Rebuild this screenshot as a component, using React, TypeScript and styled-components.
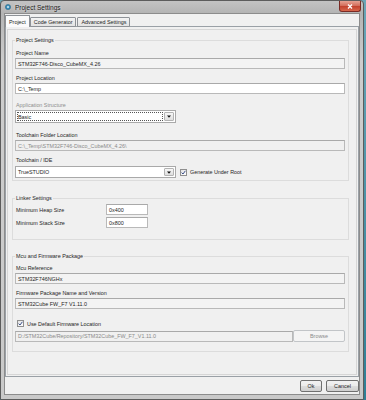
import React from 'react'
import styled, { createGlobalStyle } from 'styled-components'

const GlobalStyle = createGlobalStyle`
  html, body {
    margin: 0;
    padding: 0;
  }
  body {
    width: 366px;
    height: 400px;
    overflow: hidden;
    background: linear-gradient(180deg, #6aa6b8 0%, #2f7f95 100%);
    font-family: "Liberation Sans", Arial, sans-serif;
    color: #1e1e1e;
  }
`

const Window = styled.div`
  width: 364px;
  height: 400px;
  box-sizing: border-box;
  display: flex;
  flex-direction: column;
  background: linear-gradient(180deg, #c3c3c3 0%, #b4b4b4 12px, #cdcdcd 60px, #c9c9c9 100%);
  border: 1px solid #5c5c5c;
  border-radius: 4px 4px 0 0;
  padding: 0 3px 4px 3px;
`

const TitleBar = styled.div`
  height: 12px;
  display: flex;
  align-items: center;
  gap: 4px;
  padding-left: 1px;
  font-size: 6.5px;
  color: #1a1a1a;
`

const TitleText = styled.span`
  flex: 1;
  text-shadow: 0 0 3px rgba(255, 255, 255, 0.8);
`

const CloseButton = styled.div`
  width: 22px;
  height: 11px;
  margin-top: -1px;
  margin-right: -1px;
  box-sizing: border-box;
  display: flex;
  align-items: center;
  justify-content: center;
  border: 1px solid #7a2a24;
  border-top: none;
  border-radius: 0 0 3px 3px;
  background: linear-gradient(180deg, #e6a293 0%, #d3705e 45%, #c2432f 55%, #d7664c 100%);
`

const Client = styled.div`
  flex: 1;
  display: flex;
  flex-direction: column;
  background: #f0f0f0;
  border: 1px solid #8c8c8c;
`

const TabRow = styled.div`
  display: flex;
  align-items: flex-end;
  height: 13px;
  margin-bottom: -1px;
  position: relative;
  z-index: 1;
`

const Tab = styled.div<{ $active?: boolean }>`
  height: ${(p) => (p.$active ? 12 : 10)}px;
  box-sizing: border-box;
  display: flex;
  align-items: center;
  padding: 0 ${(p) => (p.$active ? 3 : 3)}px;
  margin-right: ${(p) => (p.$active ? 0 : 1)}px;
  font-size: 5.4px;
  border: 1px solid #8e9297;
  border-bottom: ${(p) => (p.$active ? 'none' : '1px solid #8e9297')};
  border-radius: 1px 1px 0 0;
  background: ${(p) => (p.$active ? '#fbfbfb' : 'linear-gradient(180deg, #f3f3f3, #e3e3e3)')};
`

const TabPanel = styled.div`
  flex: 1;
  display: flex;
  flex-direction: column;
  border: 1px solid #9aa0a6;
  background: #f0f0f0;
  padding: 2px 1px 1px 1px;
`

const ScrollArea = styled.div`
  flex: 1;
  border: 1px solid #d6d6d6;
  padding: 3px 7px 0 4px;
`

const Group = styled.fieldset<{ $gap: number; $bottom: number }>`
  margin: ${(p) => p.$gap}px 0 0 0;
  padding: 0 3px ${(p) => p.$bottom}px 2px;
  min-inline-size: 0;
  border: 1px solid #dcdcdc;
  border-radius: 0;
`

const Legend = styled.legend`
  padding: 0 1px;
  font-size: 5.4px;
  line-height: 8px;
`

const Label = styled.div<{ $gap: number; $muted?: boolean }>`
  margin-top: ${(p) => p.$gap}px;
  padding-left: 1px;
  font-size: 5.4px;
  line-height: 8px;
  color: ${(p) => (p.$muted ? '#8e8e8e' : '#1e1e1e')};
`

const TextField = styled.div<{ $gap: number; $tone: 'white' | 'grey' | 'disabled'; $width?: number }>`
  margin-top: ${(p) => p.$gap}px;
  height: 11px;
  box-sizing: border-box;
  width: ${(p) => (p.$width ? `${p.$width}px` : 'auto')};
  flex: ${(p) => (p.$width ? 'none' : '1')};
  display: flex;
  align-items: center;
  padding-left: 2px;
  font-size: 5.4px;
  white-space: nowrap;
  overflow: hidden;
  border: 1px solid #b9b9b9;
  border-top-color: #a9a9a9;
  background: ${(p) => (p.$tone === 'white' ? '#ffffff' : p.$tone === 'grey' ? '#f3f3f3' : '#f0f0f0')};
  color: ${(p) => (p.$tone === 'disabled' ? '#8a8a8a' : '#1e1e1e')};
`

const Select = styled.div<{ $gap: number; $height: number }>`
  margin-top: ${(p) => p.$gap}px;
  width: 161px;
  height: ${(p) => p.$height}px;
  box-sizing: border-box;
  display: flex;
  align-items: stretch;
  padding: 1px;
  border: 1px solid #a9a9a9;
  background: #ffffff;
  font-size: 5.4px;
`

const SelectValue = styled.div<{ $focused?: boolean }>`
  flex: 1;
  display: flex;
  align-items: center;
  padding-left: 1px;
  margin-right: 1px;
  outline: ${(p) => (p.$focused ? '1px dotted #555' : 'none')};
  outline-offset: -1px;
`

const ArrowButton = styled.div`
  width: 8px;
  display: flex;
  align-items: center;
  justify-content: center;
  border: 1px solid #b3b3b3;
  border-radius: 1px;
  background: linear-gradient(180deg, #f7f7f7, #dedede);
`

const Row = styled.div<{ $gap: number }>`
  margin-top: ${(p) => p.$gap}px;
  display: flex;
  align-items: center;
`

const RowLabel = styled.div`
  width: 90px;
  padding-left: 1px;
  font-size: 5.4px;
`

const CheckItem = styled.label<{ $indent: number }>`
  display: flex;
  align-items: center;
  gap: 3px;
  margin-left: ${(p) => p.$indent}px;
  font-size: 5.4px;
`

const Box = styled.span`
  width: 7px;
  height: 7px;
  box-sizing: border-box;
  display: flex;
  align-items: center;
  justify-content: center;
  border: 1px solid #8f8f8f;
  background: linear-gradient(135deg, #e2e2e2, #ffffff);
`

const Button = styled.div<{ $width: number; $disabled?: boolean }>`
  width: ${(p) => p.$width}px;
  height: 12px;
  box-sizing: border-box;
  display: flex;
  align-items: center;
  justify-content: center;
  font-size: 5.4px;
  border: 1px solid ${(p) => (p.$disabled ? '#c2c5c8' : '#707070')};
  border-radius: 2px;
  color: ${(p) => (p.$disabled ? '#8a8a8a' : '#1e1e1e')};
  background: ${(p) =>
    p.$disabled ? '#f4f4f4' : 'linear-gradient(180deg, #f2f2f2 0%, #ebebeb 50%, #dddddd 51%, #cfcfcf 100%)'};
`

const Footer = styled.div`
  height: 17px;
  display: flex;
  justify-content: flex-end;
  align-items: flex-start;
  gap: 4px;
  padding-top: 3px;
  box-sizing: border-box;
`

const AppIcon = () => (
  <svg width="6" height="6" viewBox="0 0 6 6">
    <circle cx="3" cy="3" r="2.6" fill="#3d8fb8" stroke="#1f5f80" strokeWidth="0.5" />
    <circle cx="3" cy="3" r="1" fill="#cfe8f5" />
  </svg>
)

const CloseGlyph = () => (
  <svg width="6" height="5" viewBox="0 0 6 5">
    <path d="M1 0.5 L5 4.5 M5 0.5 L1 4.5" stroke="#ffffff" strokeWidth="1.3" />
  </svg>
)

const DownArrow = () => (
  <svg width="4" height="3" viewBox="0 0 4 3">
    <path d="M0 0.5 H4 L2 2.8 Z" fill="#111" />
  </svg>
)

const Check = () => (
  <svg width="5" height="5" viewBox="0 0 5 5">
    <path d="M0.6 2.6 L2 4 L4.4 0.8" fill="none" stroke="#3b4f8a" strokeWidth="1" />
  </svg>
)

const Checkbox = ({ label, indent }: { label: string; indent: number }) => (
  <CheckItem $indent={indent}>
    <Box>
      <Check />
    </Box>
    {label}
  </CheckItem>
)

export default function App() {
  return (
    <>
      <GlobalStyle />
      <Window>
        <TitleBar>
          <AppIcon />
          <TitleText>Project Settings</TitleText>
          <CloseButton>
            <CloseGlyph />
          </CloseButton>
        </TitleBar>
        <Client>
          <TabRow>
            <Tab $active>Project</Tab>
            <Tab>Code Generator</Tab>
            <Tab>Advanced Settings</Tab>
          </TabRow>
          <TabPanel>
            <ScrollArea>
              <Group $gap={3} $bottom={2}>
                <Legend>Project Settings</Legend>
                <Label $gap={5}>Project Name</Label>
                <TextField $gap={1} $tone="grey">STM32F746-Disco_CubeMX_4.26</TextField>
                <Label $gap={5}>Project Location</Label>
                <TextField $gap={1} $tone="white">C:\_Temp</TextField>
                <Label $gap={7} $muted>
                  Application Structure
                </Label>
                <Select $gap={1} $height={13}>
                  <SelectValue $focused>Basic</SelectValue>
                  <ArrowButton>
                    <DownArrow />
                  </ArrowButton>
                </Select>
                <Label $gap={8}>Toolchain Folder Location</Label>
                <TextField $gap={1} $tone="disabled">C:\_Temp\STM32F746-Disco_CubeMX_4.26\</TextField>
                <Label $gap={5}>Toolchain / IDE</Label>
                <Row $gap={2}>
                  <Select $gap={0} $height={12}>
                    <SelectValue>TrueSTUDIO</SelectValue>
                    <ArrowButton>
                      <DownArrow />
                    </ArrowButton>
                  </Select>
                  <Checkbox label="Generate Under Root" indent={4} />
                </Row>
              </Group>

              <Group $gap={13} $bottom={11}>
                <Legend>Linker Settings</Legend>
                <Row $gap={2}>
                  <RowLabel>Minimum Heap Size</RowLabel>
                  <TextField $gap={0} $tone="white" $width={42}>
                    0x400
                  </TextField>
                </Row>
                <Row $gap={2}>
                  <RowLabel>Minimum Stack Size</RowLabel>
                  <TextField $gap={0} $tone="white" $width={42}>
                    0x800
                  </TextField>
                </Row>
              </Group>

              <Group $gap={12} $bottom={9}>
                <Legend>Mcu and Firmware Package</Legend>
                <Label $gap={4}>Mcu Reference</Label>
                <TextField $gap={1} $tone="grey">STM32F746NGHx</TextField>
                <Label $gap={5}>Firmware Package Name and Version</Label>
                <TextField $gap={1} $tone="grey">STM32Cube FW_F7 V1.11.0</TextField>
                <Row $gap={11}>
                  <Checkbox label="Use Default Firmware Location" indent={2} />
                </Row>
                <Row $gap={3}>
                  <TextField $gap={0} $tone="disabled">
                    D:/STM32Cube/Repository/STM32Cube_FW_F7_V1.11.0
                  </TextField>
                  <Button $width={52} $disabled>
                    Browse
                  </Button>
                </Row>
              </Group>
            </ScrollArea>
          </TabPanel>
          <Footer>
            <Button $width={22}>Ok</Button>
            <Button $width={33}>Cancel</Button>
          </Footer>
        </Client>
      </Window>
    </>
  )
}
